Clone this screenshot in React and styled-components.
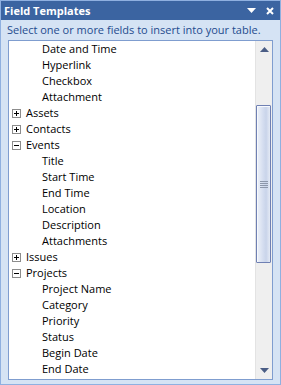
import React from "react";
import styled, { createGlobalStyle } from "styled-components";

const Global = createGlobalStyle`
  html, body { margin: 0; padding: 0; background: #ffffff; }
  * { box-sizing: border-box; }
`;

const Pane = styled.div`
  width: 281px;
  height: 385px;
  border: 1px solid #8fb0e0;
  background: #d5e3f4;
  display: flex;
  flex-direction: column;
  font-family: "Open Sans", "Noto Sans", sans-serif;
`;

const TitleBar = styled.div`
  height: 19px;
  background: #3b64a1;
  display: flex;
  align-items: center;
  padding: 0 6px 0 3px;
  color: #ffffff;
`;

const Title = styled.div`
  flex: 1;
  font-weight: 700;
  font-size: 11px;
  line-height: 19px;
`;

const TitleButtons = styled.div`
  display: flex;
  align-items: center;
  gap: 10px;
`;

const Description = styled.div`
  height: 20px;
  padding-left: 6px;
  color: #1e4b8e;
  font-size: 11px;
  line-height: 20px;
  white-space: nowrap;
`;

const ListBox = styled.div`
  margin: 0 7px;
  height: 340px;
  border: 1px solid #7f9dcf;
  background: #ffffff;
  display: flex;
`;

const Rows = styled.div`
  flex: 1;
  overflow: hidden;
`;

const Row = styled.div`
  height: 16px;
  display: flex;
  align-items: center;
  padding-left: ${(p) => (p.$child ? 33 : 3)}px;
  font-size: 11px;
  line-height: 16px;
  color: #000000;
  white-space: nowrap;
`;

const Toggle = styled.span`
  width: 9px;
  height: 9px;
  border: 1px solid #8c8c8c;
  background: #ffffff;
  margin-right: 5px;
  flex: none;
  display: flex;
  align-items: center;
  justify-content: center;
`;

const ScrollBar = styled.div`
  width: 17px;
  flex: none;
  background: #efefef;
  border-left: 1px solid #e3e3e3;
  display: flex;
  flex-direction: column;
`;

const ArrowButton = styled.div`
  height: 17px;
  display: flex;
  align-items: center;
  justify-content: center;
  flex: none;
`;

const Track = styled.div`
  flex: 1;
  display: flex;
  flex-direction: column;
  padding-top: ${(p) => p.$top}px;
`;

const Thumb = styled.div`
  height: 158px;
  margin-left: 0px;
  width: 15px;
  border: 1px solid #6f80b3;
  border-radius: 1px;
  background: linear-gradient(to right, #eef2f9 0%, #d5def0 45%, #c9d4ea 70%, #e4eaf5 100%);
  box-shadow: inset 1px 1px 0 #f7f9fd;
  display: flex;
  align-items: center;
  justify-content: center;
`;

const Grip = styled.div`
  width: 8px;
  display: flex;
  flex-direction: column;
  gap: 1px;
`;

const GripLine = styled.div`
  height: 1px;
  background: #8d97aa;
`;

const PlusMinus = ({ open }) => (
  <svg width="7" height="7" viewBox="0 0 7 7">
    <rect x="1" y="3" width="5" height="1" fill="#000" />
    {!open && <rect x="3" y="1" width="1" height="5" fill="#000" />}
  </svg>
);

const items = [
  { t: "Date and Time", c: true },
  { t: "Hyperlink", c: true },
  { t: "Checkbox", c: true },
  { t: "Attachment", c: true },
  { t: "Assets", open: false },
  { t: "Contacts", open: false },
  { t: "Events", open: true },
  { t: "Title", c: true },
  { t: "Start Time", c: true },
  { t: "End Time", c: true },
  { t: "Location", c: true },
  { t: "Description", c: true },
  { t: "Attachments", c: true },
  { t: "Issues", open: false },
  { t: "Projects", open: true },
  { t: "Project Name", c: true },
  { t: "Category", c: true },
  { t: "Priority", c: true },
  { t: "Status", c: true },
  { t: "Begin Date", c: true },
  { t: "End Date", c: true },
];

export default function App() {
  return (
    <>
      <Global />
      <Pane>
        <TitleBar>
          <Title>Field Templates</Title>
          <TitleButtons>
            <svg width="9" height="5" viewBox="0 0 9 5">
              <polygon points="0,0 9,0 4.5,5" fill="#fff" />
            </svg>
            <svg width="8" height="8" viewBox="0 0 8 8">
              <path d="M1 1 L7 7 M7 1 L1 7" stroke="#fff" strokeWidth="2" />
            </svg>
          </TitleButtons>
        </TitleBar>
        <Description>Select one or more fields to insert into your table.</Description>
        <ListBox>
          <Rows>
            {items.map((it) => (
              <Row key={it.t} $child={it.c}>
                {!it.c && (
                  <Toggle>
                    <PlusMinus open={it.open} />
                  </Toggle>
                )}
                {it.t}
              </Row>
            ))}
          </Rows>
          <ScrollBar>
            <ArrowButton>
              <svg width="9" height="5" viewBox="0 0 9 5">
                <polygon points="4.5,0 9,5 0,5" fill="#4a5d85" />
              </svg>
            </ArrowButton>
            <Track $top={47}>
              <Thumb>
                <Grip>
                  <GripLine />
                  <GripLine />
                  <GripLine />
                  <GripLine />
                </Grip>
              </Thumb>
            </Track>
            <ArrowButton>
              <svg width="9" height="5" viewBox="0 0 9 5">
                <polygon points="0,0 9,0 4.5,5" fill="#4a5d85" />
              </svg>
            </ArrowButton>
          </ScrollBar>
        </ListBox>
      </Pane>
    </>
  );
}
